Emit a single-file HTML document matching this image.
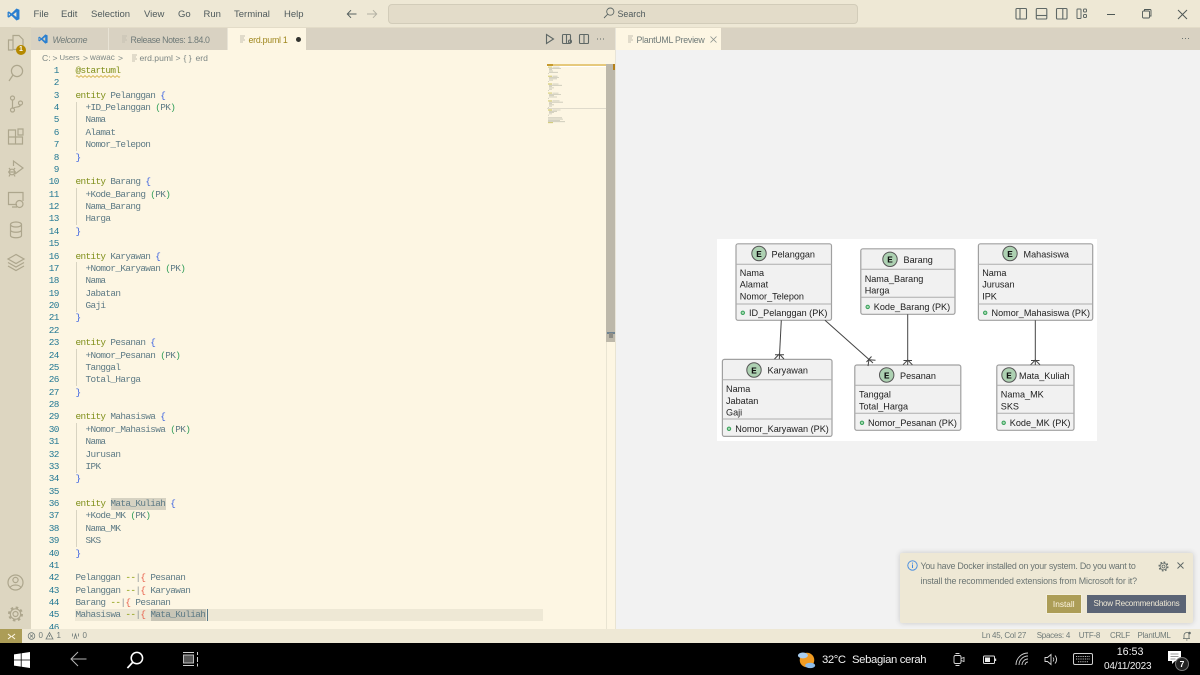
<!DOCTYPE html>
<html lang="en"><head><meta charset="utf-8"><title>erd.puml</title>
<style>
html,body{margin:0;padding:0;width:1200px;height:675px;overflow:hidden;background:#000}
#r{position:absolute;left:0;top:0;width:1200px;height:675px;overflow:hidden;font-family:"Liberation Sans",sans-serif;filter:blur(.3px)}
.a{position:absolute}
.t{position:absolute;white-space:nowrap;line-height:14px;height:14px}
.m{font-size:9.5px;color:#4f5a5c;top:7.5px}
.tab{font-size:8.8px;letter-spacing:-.25px;color:#6f7a78;top:32.5px}
.bc{font-size:8.6px;color:#7d8785;top:50.5px}
.st{font-size:8px;letter-spacing:-.25px;color:#6f7a78;top:629px}
#code{position:absolute;left:75.5px;top:64.9px;font-family:"Liberation Mono",monospace;font-size:9.4px;letter-spacing:-.64px;color:#5d7a85;white-space:pre}
#code div{height:12.375px;line-height:12.375px}
#nums{position:absolute;left:30px;width:28.7px;top:64.9px;text-align:right;font-family:"Liberation Mono",monospace;font-size:9.4px;letter-spacing:-.64px;color:#237893}
#nums div{height:12.375px;line-height:12.375px}
.e{color:#7f8f1a}.b{color:#3b62e0}.p{color:#2f9e58}.o{color:#859900}.r{color:#e8604c}.g{color:#8c9698}
svg{position:absolute;overflow:visible}
.ic{fill:none;stroke:#ada68d;stroke-width:1.2}
</style></head><body><div id="r">

<!-- backgrounds -->
<div class="a" style="left:0;top:0;width:1200px;height:27px;background:#eee8d5"></div>
<div class="a" style="left:0;top:27px;width:1200px;height:1px;background:#e3dcc8"></div>
<div class="a" style="left:0;top:27px;width:31px;height:602px;background:#ddd6c1"></div>
<div class="a" style="left:31px;top:28px;width:1169px;height:22px;background:#d9d2c2"></div>
<div class="a" style="left:31px;top:50px;width:584px;height:579px;background:#fdf6e3"></div>
<div class="a" style="left:615px;top:28px;width:1.5px;height:601px;background:#e8e4d8"></div>
<div class="a" style="left:616px;top:50px;width:584px;height:579px;background:#f2f2f2"></div>
<div class="a" style="left:0;top:629px;width:1200px;height:14px;background:#eee8d5"></div>
<div class="a" style="left:0;top:643px;width:1200px;height:32px;background:#000"></div>

<!-- title bar -->
<svg style="left:7px;top:7.5px" width="13" height="13" viewBox="0 0 24 24"><path fill="#2a7fd0" fill-rule="evenodd" d="M17.5 1 8.2 10 3.4 6.3 1 7.5v9l2.4 1.2L8.2 14l9.3 9 5.500-2.300V3.300zM17.300 7.300 11.400 12l5.900 4.700zM3.400 9.400 5.900 12l-2.500 2.600z"/></svg>
<div class="t m" style="left:33.5px">File</div>
<div class="t m" style="left:61px">Edit</div>
<div class="t m" style="left:91px">Selection</div>
<div class="t m" style="left:144px">View</div>
<div class="t m" style="left:178px">Go</div>
<div class="t m" style="left:203.5px">Run</div>
<div class="t m" style="left:234px">Terminal</div>
<div class="t m" style="left:284px">Help</div>
<svg style="left:346px;top:9px" width="12" height="10" viewBox="0 0 12 10"><path d="M10.5 5H1.5M5 1.2 1.3 5 5 8.8" fill="none" stroke="#55605f" stroke-width="1"/></svg>
<svg style="left:366px;top:9px" width="12" height="10" viewBox="0 0 12 10"><path d="M1 5h9M7 1.2 10.7 5 7 8.8" fill="none" stroke="#b3b1a3" stroke-width="1"/></svg>
<div class="a" style="left:387.5px;top:4px;width:468px;height:18px;background:#e3dcc9;border:1px solid #d2ccb9;border-radius:4px"></div>
<svg style="left:603px;top:7px" width="12" height="12" viewBox="0 0 12 12"><circle cx="7.3" cy="4.6" r="3.6" fill="none" stroke="#5c6664" stroke-width=".9"/><path d="M4.700 7.200 1 11" stroke="#5c6664" stroke-width=".9"/></svg>
<div class="t" style="left:617.5px;top:7px;font-size:8.9px;color:#4f5a5c">Search</div>
<!-- layout icons -->
<svg style="left:1015px;top:7px" width="60" height="14" viewBox="0 0 60 14"><g fill="none" stroke="#5f6866" stroke-width="1.1"><rect x="1" y="1.500" width="10.500" height="10.500" rx="1"/><path d="M5 1.500v10.500"/><rect x="21.300" y="1.500" width="10.500" height="10.500" rx="1"/><path d="M21.300 8.500h10.500"/><rect x="41.500" y="1.500" width="10.500" height="10.500" rx="1"/><path d="M47.800 1.500v10.500"/></g></svg>
<svg style="left:1076px;top:8px" width="14" height="12" viewBox="0 0 14 12"><g fill="none" stroke="#5f6866" stroke-width="1"><rect x="1" y="1" width="4" height="9.500" rx=".6"/><rect x="7.500" y="1" width="3" height="3" rx="1"/><rect x="7.500" y="6.500" width="3" height="3" rx="1"/></g></svg>
<div class="a" style="left:1106.5px;top:13.5px;width:8px;height:1px;background:#4e5856"></div>
<svg style="left:1141px;top:8px" width="12" height="12" viewBox="0 0 12 12"><g fill="none" stroke="#4e5856" stroke-width=".9"><rect x="1.500" y="3" width="7" height="7" rx="1"/><path d="M3.500 3V1.500h5.500a1 1 0 0 1 1 1V8H8.500"/></g></svg>
<svg style="left:1177px;top:8.5px" width="11" height="11" viewBox="0 0 11 11"><path d="M1 1l9 9M10 1l-9 9" stroke="#4e5856" stroke-width="1"/></svg>

<!-- tabs -->
<div class="a" style="left:108px;top:28px;width:1px;height:22px;background:#e8e3d5"></div>
<div class="a" style="left:227px;top:28px;width:1px;height:22px;background:#e8e3d5"></div>
<div class="a" style="left:228px;top:28px;width:78px;height:22px;background:#fdf6e3"></div>
<div class="a" style="left:616px;top:28px;width:105px;height:22px;background:#fdf6e3"></div>
<svg style="left:37.5px;top:33.5px" width="10" height="10" viewBox="0 0 24 24"><path fill="#2a7fd0" fill-rule="evenodd" d="M17.500 1 8.200 10 3.400 6.300 1 7.500v9l2.400 1.200L8.200 14l9.300 9 5.500-2.300V3.300zM17.300 7.300 11.400 12l5.900 4.700zM3.400 9.400 5.900 12l-2.500 2.600z"/></svg>
<div class="t tab" style="left:52.5px;font-style:italic">Welcome</div>
<svg style="left:121px;top:35px" width="7" height="8" viewBox="0 0 7 8"><path d="M1 1h5M1 3h4M1 5h5M1 7h3" stroke="#c5c0b1" stroke-width=".9"/></svg>
<div class="t tab" style="left:130.5px;letter-spacing:-.38px">Release Notes: 1.84.0</div>
<svg style="left:239px;top:35px" width="7" height="8" viewBox="0 0 7 8"><path d="M1 1h5M1 3h4M1 5h5M1 7h3" stroke="#c5c0b1" stroke-width=".9"/></svg>
<div class="t tab" style="left:248.5px;color:#a08820">erd.puml 1</div>
<div class="a" style="left:295.5px;top:36.5px;width:5px;height:5px;border-radius:50%;background:#33342f"></div>
<svg style="left:545px;top:33px" width="70" height="12" viewBox="0 0 70 12"><g fill="none" stroke="#5f6866" stroke-width="1.100"><path d="M1.500 1.500v9l7-4.500z"/><rect x="17.500" y="1.500" width="8" height="9" rx="1"/><path d="M21.500 1.500v9"/><circle cx="25" cy="8.500" r="1.500"/><rect x="34.500" y="1.500" width="9" height="9" rx="1"/><path d="M39 1.500v9"/></g><path d="M52 6h1M55 6h1M58 6h1" stroke="#5f6866" stroke-width="1"/></svg>
<svg style="left:627px;top:35px" width="7" height="8" viewBox="0 0 7 8"><path d="M1 1h5M1 3h4M1 5h5M1 7h3" stroke="#c5c0b1" stroke-width=".9"/></svg>
<div class="t tab" style="left:636.5px">PlantUML Preview</div>
<svg style="left:709.5px;top:35.5px" width="7" height="7" viewBox="0 0 7 7"><path d="M.5.5l6 6M6.500.5l-6 6" stroke="#8a918d" stroke-width=".8"/></svg>
<svg style="left:1181px;top:37px" width="10" height="3" viewBox="0 0 10 3"><path d="M1 1.500h1M4 1.500h1M7 1.500h1" stroke="#6b7472" stroke-width="1"/></svg>

<!-- activity bar -->
<svg style="left:0;top:0" width="31" height="280" viewBox="0 0 31 280">
<g class="ic">
<path d="M13 35.500h6l4 4v10h-10zM13 40H8.500v9.500M8.500 49.500v.5h4.500"/>
<circle cx="17" cy="71" r="5.600"/><path d="M13 75 9 81"/>
<circle cx="12.500" cy="98" r="2"/><circle cx="12.500" cy="110" r="2"/><circle cx="20.500" cy="103" r="2"/><path d="M12.500 100v8M20.500 105c0 2.500-6 1.500-8 3.500"/>
<path d="M8.500 137h7v-7h-7zM8.500 144h7v-7h-7zM15.500 144h7v-7h-7zM18 129h5v6h-5z"/>
<path d="M13.500 166v-5l9.500 7-8 6"/><circle cx="12" cy="172" r="2.800"/><path d="M8 172h8M9 168l1.500 2M15 168l-1.500 2M9 176.500l1-2M15 176.500l-1-2"/>
<path d="M23 201v-8.500H8.500v12h8.500M12 207h5"/><circle cx="19.500" cy="204" r="3.500"/>
<ellipse cx="16" cy="224.500" rx="5.500" ry="2.500"/><path d="M10.500 224.500v11c0 3 11 3 11 0v-11M10.500 230c0 3 11 3 11 0"/>
<path d="M16 254.500l-8 4.500 8 4.500 8-4.500zM8 262.500l8 4.500 8-4.500M8 266l8 4.500 8-4.500"/>
</g></svg>
<div class="a" style="left:16px;top:44.5px;width:10px;height:10px;border-radius:50%;background:#b58900;color:#fff;font-size:7px;font-weight:bold;line-height:10px;text-align:center">1</div>
<svg style="left:0;top:570px" width="31" height="55" viewBox="0 0 31 55"><g class="ic"><circle cx="15.500" cy="12.500" r="7.500"/><circle cx="15.500" cy="10" r="2.600"/><path d="M10 18c1-4 10-4 11 0"/><circle cx="15.500" cy="44" r="2.500"/><circle cx="15.500" cy="44" r="5.200"/><circle cx="15.500" cy="44" r="6.500" stroke-width="2" stroke-dasharray="2.600 2.500"/></g></svg>

<!-- breadcrumb -->
<div class="t bc" style="left:42px">C:</div><div class="t bc" style="left:52.500px">&gt;</div>
<div class="t bc" style="left:59.500px;font-size:7.700px">Users</div><div class="t bc" style="left:83px">&gt;</div>
<div class="t bc" style="left:90px;font-size:8.100px">wawac</div><div class="t bc" style="left:118px">&gt;</div>
<svg style="left:130.500px;top:54px" width="7" height="8" viewBox="0 0 7 8"><path d="M1 1h5M1 3h4M1 5h5M1 7h3" stroke="#c5c0b1" stroke-width=".9"/></svg>
<div class="t bc" style="left:139.500px">erd.puml</div><div class="t bc" style="left:175.500px">&gt;</div>
<div class="t bc" style="left:183.500px">{ }</div>
<div class="t bc" style="left:195.500px">erd</div>

<!-- line highlight & selection -->
<div class="a" style="left:75px;top:608.800px;width:468px;height:12.400px;background:#eee8d5"></div>
<div class="a" style="left:150.500px;top:608.800px;width:55.500px;height:12.400px;background:#c8c5b6"></div>
<div class="a" style="left:110.500px;top:497.500px;width:55.500px;height:12.400px;background:#d6d2c2"></div>
<div class="a" style="left:206.500px;top:608.800px;width:1px;height:12.400px;background:#56788a"></div>

<!-- indent guides -->
<div class="a" style="left:76px;top:101.500px;width:1px;height:49.500px;background:#d8d3c1"></div>
<div class="a" style="left:76px;top:188px;width:1px;height:37px;background:#d8d3c1"></div>
<div class="a" style="left:76px;top:262.300px;width:1px;height:49.500px;background:#d8d3c1"></div>
<div class="a" style="left:76px;top:348.900px;width:1px;height:37px;background:#d8d3c1"></div>
<div class="a" style="left:76px;top:423.100px;width:1px;height:49.500px;background:#d8d3c1"></div>
<div class="a" style="left:76px;top:509.800px;width:1px;height:37px;background:#d8d3c1"></div>

<div id="nums"><div>1</div><div>2</div><div>3</div><div>4</div><div>5</div><div>6</div><div>7</div><div>8</div><div>9</div><div>10</div><div>11</div><div>12</div><div>13</div><div>14</div><div>15</div><div>16</div><div>17</div><div>18</div><div>19</div><div>20</div><div>21</div><div>22</div><div>23</div><div>24</div><div>25</div><div>26</div><div>27</div><div>28</div><div>29</div><div>30</div><div>31</div><div>32</div><div>33</div><div>34</div><div>35</div><div>36</div><div>37</div><div>38</div><div>39</div><div>40</div><div>41</div><div>42</div><div>43</div><div>44</div><div>45</div><div style="height:7.500px;overflow:hidden">46</div></div>

<div id="code"><div class="e">@startuml</div><div> </div><div><span class="e">entity</span> Pelanggan <span class="b">{</span></div><div>  +ID_Pelanggan <span class="p">(</span>PK<span class="p">)</span></div><div>  Nama</div><div>  Alamat</div><div>  Nomor_Telepon</div><div><span class="b">}</span></div><div> </div><div><span class="e">entity</span> Barang <span class="b">{</span></div><div>  +Kode_Barang <span class="p">(</span>PK<span class="p">)</span></div><div>  Nama_Barang</div><div>  Harga</div><div><span class="b">}</span></div><div> </div><div><span class="e">entity</span> Karyawan <span class="b">{</span></div><div>  +Nomor_Karyawan <span class="p">(</span>PK<span class="p">)</span></div><div>  Nama</div><div>  Jabatan</div><div>  Gaji</div><div><span class="b">}</span></div><div> </div><div><span class="e">entity</span> Pesanan <span class="b">{</span></div><div>  +Nomor_Pesanan <span class="p">(</span>PK<span class="p">)</span></div><div>  Tanggal</div><div>  Total_Harga</div><div><span class="b">}</span></div><div> </div><div><span class="e">entity</span> Mahasiswa <span class="b">{</span></div><div>  +Nomor_Mahasiswa <span class="p">(</span>PK<span class="p">)</span></div><div>  Nama</div><div>  Jurusan</div><div>  IPK</div><div><span class="b">}</span></div><div> </div><div><span class="e">entity</span> Mata_Kuliah <span class="b">{</span></div><div>  +Kode_MK <span class="p">(</span>PK<span class="p">)</span></div><div>  Nama_MK</div><div>  SKS</div><div><span class="b">}</span></div><div> </div><div>Pelanggan <span class="o">--</span><span class="g">|</span><span class="r">{</span> Pesanan</div><div>Pelanggan <span class="o">--</span><span class="g">|</span><span class="r">{</span> Karyawan</div><div>Barang <span class="o">--</span><span class="g">|</span><span class="r">{</span> Pesanan</div><div>Mahasiswa <span class="o">--</span><span class="g">|</span><span class="r">{</span> Mata_Kuliah</div></div>
<svg style="left:75.500px;top:74.500px" width="46" height="3" viewBox="0 0 46 3"><path d="M0 1.500q1-1.500 2 0t2 0 2 0 2 0 2 0 2 0 2 0 2 0 2 0 2 0 2 0 2 0 2 0 2 0 2 0 2 0 2 0 2 0 2 0 2 0 2 0 2 0" fill="none" stroke="#c9a020" stroke-width=".7"/></svg>

<!-- minimap -->
<div class="a" style="left:547px;top:64px;width:59px;height:2px;background:#e6c97c"></div>
<div class="a" style="left:547px;top:64px;width:6px;height:2px;background:#c79a2e"></div>
<div class="a" style="left:547px;top:66px;width:59px;height:.8px;background:#fff"></div>
<div class="a" style="left:547px;top:108px;width:59px;height:1px;background:#dfdacb"></div>
<svg style="left:0;top:0" width="620" height="130" viewBox="0 0 620 130">
<path d="M548 67.100h4M548 84h4M548 76.200h4M548 93.100h4M548 100.900h4M548 110h4M548 122.700h5" stroke="#c9c05a" stroke-width=".9"/>
<path d="M552.500 67.100h7M549 68.400h12M549 69.700h3M549 71h4M549 72.300h9M548 73.600h1M552.500 76.200h5M549 77.500h10M549 78.800h8M549 80.100h4M548 81.400h1M552.500 84h6M549 85.300h13M549 86.600h3M549 87.900h5M549 89.200h3M548 90.500h1M552.500 93.100h6M549 94.400h12M549 95.700h5M549 97h8M548 98.300h1M552.500 100.900h7M549 102.200h14M549 103.500h3M549 104.800h5M549 106.100h3M548 107.400h1M552.500 110h8M549 111.300h8M549 112.600h5M549 113.900h3M548 115.200h1M548 117.800h14M548 119.100h15M548 120.400h12M548 121.700h17" stroke="#c8c6b6" stroke-width=".8"/></svg>
<!-- scrollbar -->
<div class="a" style="left:606px;top:64px;width:9px;height:278px;background:#bdb8aa"></div>
<div class="a" style="left:613px;top:64px;width:2px;height:6px;background:#b5801a"></div>
<div class="a" style="left:607px;top:332px;width:8px;height:1.500px;background:#6f8391"></div>
<div class="a" style="left:609px;top:333px;width:4px;height:5px;background:#8e8d86"></div>
<div class="a" style="left:606px;top:342px;width:1px;height:287px;background:#e9e4d2"></div>
<div class="a" style="left:614.500px;top:342px;width:1px;height:287px;background:#e9e4d2"></div>

<!-- diagram -->
<div class="a" style="left:717px;top:239px;width:380px;height:201.500px;background:#fff"></div>
<svg style="left:0;top:0" width="1200" height="675" viewBox="0 0 1200 675" font-family="Liberation Sans, sans-serif" font-size="9.100">
<g fill="#f1f1f1" stroke="#a0a0a0" stroke-width="1.200">
<rect x="736" y="243.800" width="95.500" height="76.500" rx="2"/>
<rect x="860.800" y="248.800" width="94.200" height="65.500" rx="2"/>
<rect x="978.400" y="243.800" width="114.300" height="76.500" rx="2"/>
<rect x="722.400" y="359.400" width="109.600" height="77" rx="2"/>
<rect x="854.800" y="365" width="106" height="65.300" rx="2"/>
<rect x="996.800" y="365" width="77.200" height="65.300" rx="2"/>
</g>
<path d="M736 264.300h95.500M736 304h95.500M860.800 269.300h94.200M860.800 297.300h94.200M978.400 264.300h114.300M978.400 304h114.300M722.400 379.700h109.600M722.400 419h109.600M854.800 385.300h106M854.800 413.300h106M996.800 385.300h77.200M996.800 413.300h77.200" stroke="#adadad" stroke-width="1" fill="none"/>
<g fill="none" stroke="#444" stroke-width="1">
<path d="M781.300 320.300 779.300 359"/><path d="M775 354.800h9M779.300 354 774.500 359M779.300 354 784 359"/>
<path d="M825 320.300 873 363"/><path d="M866.500 362l5-5.500M869 359.700 868 366M869 359.700 875.500 360.300"/>
<path d="M907.700 314.300V365"/><path d="M903.500 360.500h8.500M907.700 360 903 364.800M907.700 360 912.400 364.800"/>
<path d="M1035.300 320.300V365"/><path d="M1031 360.500h8.500M1035.300 360 1030.600 364.800M1035.300 360 1040 364.800"/>
</g>
<g fill="#add1b2" stroke="#555" stroke-width="1">
<circle cx="759" cy="253.500" r="7.200"/><circle cx="890" cy="259.300" r="7.200"/><circle cx="1010" cy="253.500" r="7.200"/><circle cx="754" cy="370" r="7.200"/><circle cx="886.700" cy="375" r="7.200"/><circle cx="1009" cy="375" r="7.200"/>
</g>
<g font-family="Liberation Mono, monospace" font-weight="bold" font-size="9.500" fill="#111" text-anchor="middle">
<text x="759" y="256.800">E</text><text x="890" y="262.600">E</text><text x="1010" y="256.800">E</text><text x="754" y="373.300">E</text><text x="886.700" y="378.300">E</text><text x="1009" y="378.300">E</text>
</g>
<g fill="#1d1d1d">
<text x="771.500" y="257.500">Pelanggan</text><text x="903.500" y="263">Barang</text><text x="1023.500" y="257.500">Mahasiswa</text><text x="767.500" y="373.500">Karyawan</text><text x="900" y="379">Pesanan</text><text x="1019" y="379">Mata_Kuliah</text>
<text x="739.800" y="276">Nama</text><text x="739.800" y="287.500">Alamat</text><text x="739.800" y="299.500">Nomor_Telepon</text><text x="749" y="316">ID_Pelanggan (PK)</text>
<text x="864.700" y="282">Nama_Barang</text><text x="864.700" y="293.500">Harga</text><text x="873.800" y="310">Kode_Barang (PK)</text>
<text x="982.200" y="276">Nama</text><text x="982.200" y="287.500">Jurusan</text><text x="982.200" y="299.500">IPK</text><text x="991.500" y="316">Nomor_Mahasiswa (PK)</text>
<text x="726" y="392">Nama</text><text x="726" y="404">Jabatan</text><text x="726" y="415.500">Gaji</text><text x="735.300" y="432">Nomor_Karyawan (PK)</text>
<text x="859" y="397.500">Tanggal</text><text x="859" y="409.500">Total_Harga</text><text x="868" y="426">Nomor_Pesanan (PK)</text>
<text x="1000.800" y="397.500">Nama_MK</text><text x="1000.800" y="409.500">SKS</text><text x="1009.800" y="426">Kode_MK (PK)</text>
</g>
<g fill="#a9dcb5" stroke="#38a05a" stroke-width="1"><circle cx="742.800" cy="312.800" r="1.700"/><circle cx="867.700" cy="306.900" r="1.700"/><circle cx="985.200" cy="312.800" r="1.700"/><circle cx="729" cy="428.800" r="1.700"/><circle cx="862" cy="422.800" r="1.700"/><circle cx="1003.700" cy="422.800" r="1.700"/></g>
</svg>

<!-- notification -->
<div class="a" style="left:900px;top:553px;width:293px;height:69.500px;background:#eee8d5;border-radius:2px;box-shadow:0 0 6px rgba(0,0,0,.18)"></div>
<svg style="left:906.500px;top:560px" width="11" height="11" viewBox="0 0 11 11"><circle cx="5.500" cy="5.500" r="4.700" fill="none" stroke="#3f88e0" stroke-width=".9"/><path d="M5.500 4.500v3.500M5.500 2.600v1" stroke="#3f88e0" stroke-width="1"/></svg>
<div class="t" style="left:920.500px;top:559px;font-size:8.900px;letter-spacing:-.25px;color:#6b7573">You have Docker installed on your system. Do you want to</div>
<div class="t" style="left:920.500px;top:574px;font-size:8.900px;letter-spacing:-.15px;color:#6b7573">install the recommended extensions from Microsoft for it?</div>
<svg style="left:1158px;top:560.500px" width="11" height="11" viewBox="0 0 11 11"><g fill="none" stroke="#5c6664"><circle cx="5.500" cy="5.500" r="1.500" stroke-width=".8"/><circle cx="5.500" cy="5.500" r="3.400" stroke-width=".8"/><circle cx="5.500" cy="5.500" r="4.400" stroke-width="1.200" stroke-dasharray="1.700 1.750"/></g></svg>
<svg style="left:1176.500px;top:562px" width="7" height="7" viewBox="0 0 7 7"><path d="M.5.500l6 6M6.500.500l-6 6" stroke="#5c6664" stroke-width=".9"/></svg>
<div class="a" style="left:1046.500px;top:594.500px;width:34.500px;height:18px;background:#ac9d57;color:#fdf6e3;font-size:8.300px;line-height:18px;text-align:center;box-shadow:0 0 0 .7px #f7f2e0">Install</div>
<div class="a" style="left:1087px;top:595px;width:99px;height:17.500px;background:#5b6475;color:#eee8d5;font-size:8.100px;letter-spacing:-.2px;line-height:17.500px;text-align:center">Show Recommendations</div>

<!-- status bar -->
<div class="a" style="left:0;top:629px;width:22px;height:14px;background:#ac9d57"></div>
<svg style="left:7px;top:631.500px" width="9" height="9" viewBox="0 0 9 9"><path d="M1 7 4 4.500 1 2M8 2 5 4.500 8 7" fill="none" stroke="#fdf6e3" stroke-width="1"/></svg>
<svg style="left:28px;top:631px" width="60" height="10" viewBox="0 0 60 10"><g fill="none" stroke="#6f7a78" stroke-width=".8"><circle cx="3.500" cy="5" r="3.300"/><path d="M2 3.500l3 3M5 3.500l-3 3"/><path d="M18 8h7l-3.500-6.500zM21.500 4v2"/><path d="M46 8l1.500-5 1.500 5M44.500 2.500v3M50.500 2.500v3"/></g></svg>
<div class="t st" style="left:38.500px">0</div><div class="t st" style="left:56.500px">1</div><div class="t st" style="left:82.500px">0</div>
<div class="t st" style="left:981.700px">Ln 45, Col 27</div>
<div class="t st" style="left:1036.700px">Spaces: 4</div>
<div class="t st" style="left:1078.700px">UTF-8</div>
<div class="t st" style="left:1110px">CRLF</div>
<div class="t st" style="left:1137.500px">PlantUML</div>
<svg style="left:1181.500px;top:631px" width="10" height="10" viewBox="0 0 10 10"><path d="M2 7.500V4.500a3 3 0 0 1 5-2.200V7.500zM1 7.500h7M4 9h1.500" fill="none" stroke="#5f6866" stroke-width=".8"/><circle cx="7.500" cy="2" r="1.300" fill="#5f6866"/></svg>

<!-- taskbar -->
<svg style="left:14px;top:651.500px" width="16" height="16" viewBox="0 0 16 16"><path fill="#fff" d="M0 2.400 6.800 1.400v6.200H0zM7.600 1.300 16 0v7.600H7.600zM0 8.400h6.800v6.200L0 13.600zM7.600 8.400H16V16l-8.400-1.300z"/></svg>
<svg style="left:70px;top:651px" width="17" height="16" viewBox="0 0 17 16"><path d="M16.500 8H1M8 1 1 8l7 7" fill="none" stroke="#b5b5b5" stroke-width="1"/></svg>
<svg style="left:125.500px;top:651px" width="18" height="18" viewBox="0 0 19 19"><circle cx="11.500" cy="7.500" r="6" fill="none" stroke="#fff" stroke-width="1.600"/><path d="M7 12 1.500 18" stroke="#fff" stroke-width="1.800"/></svg>
<svg style="left:182px;top:651px" width="17" height="16" viewBox="0 0 17 16"><g fill="none" stroke="#d0d0d0" stroke-width="1"><path d="M1 1.500h11M1 14.500h11"/><rect x="1.500" y="4" width="10" height="8" fill="#555" stroke="#bbb"/><path d="M15.500 1v3M15.500 6v5M15.500 12.500v3"/></g></svg>
<!-- weather -->
<svg style="left:796.500px;top:649.500px" width="20" height="20" viewBox="0 0 22 22"><circle cx="11" cy="11" r="8" fill="#f09b22"/><path d="M12 3a8 8 0 0 1 0 16 7 7 0 0 0 0-16z" fill="#e57e1a"/><ellipse cx="6.500" cy="6" rx="5.500" ry="3.200" fill="#a9cdee"/><ellipse cx="14.500" cy="17" rx="5.500" ry="3" fill="#8dbbe8"/></svg>
<div class="t" style="left:822px;top:653px;font-size:11.300px;letter-spacing:-.4px;color:#f2f2f2">32°C</div>
<div class="t" style="left:852px;top:653px;font-size:11.300px;letter-spacing:-.35px;color:#f2f2f2">Sebagian cerah</div>
<svg style="left:952px;top:652px" width="14" height="15" viewBox="0 0 14 15"><g fill="none" stroke="#d8d8d8" stroke-width=".9"><rect x="2" y="3.500" width="7" height="8" rx="1.500"/><path d="M3.500 1.500h4M3.500 13.500h4M9 6.500l3-1v4l-3-1"/></g></svg>
<svg style="left:983px;top:655px" width="14" height="10" viewBox="0 0 14 10"><rect x=".5" y="1" width="11" height="7.500" rx="1" fill="none" stroke="#ddd"/><rect x="2" y="2.500" width="5" height="4.500" fill="#eee"/><rect x="12" y="3.500" width="1.200" height="2.500" fill="#ddd"/></svg>
<svg style="left:1015px;top:652px" width="15" height="15" viewBox="0 0 15 15"><g fill="none" stroke="#cfcfcf" stroke-width=".9"><path d="M1 13a12 12 0 0 1 12-12M4 13a9 9 0 0 1 9-9M7 13a6 6 0 0 1 6-6M10 13a3 3 0 0 1 3-3"/></g></svg>
<svg style="left:1044px;top:652px" width="15" height="15" viewBox="0 0 15 15"><g fill="none" stroke="#d8d8d8" stroke-width=".9"><path d="M1 5.500h2.500L7 2.500v10l-3.500-3H1zM9 5.500a3 3 0 0 1 0 4M11 3.500a6 6 0 0 1 0 8"/></g></svg>
<svg style="left:1073px;top:653px" width="20" height="13" viewBox="0 0 20 13"><rect x=".5" y=".5" width="19" height="11" rx="1.500" fill="none" stroke="#d0d0d0"/><path d="M3 3.500h14M3 6h14M5 8.800h10" stroke="#bbb" stroke-width="1" stroke-dasharray="1 .8"/></svg>
<div class="t" style="left:1116.700px;top:645px;font-size:10.700px;color:#eee">16:53</div>
<div class="t" style="left:1104px;top:659.500px;font-size:10px;letter-spacing:-.2px;color:#eee">04/11/2023</div>
<svg style="left:1168px;top:651px" width="14" height="13" viewBox="0 0 14 13"><path d="M0 0h13v10H7l-3 3v-3H0z" fill="#fff"/><path d="M2.500 3h8M2.500 5.500h8M2.500 8h5" stroke="#777" stroke-width=".7"/></svg>
<div class="a" style="left:1175px;top:657px;width:12px;height:12px;border-radius:50%;background:#222;border:1px solid #777;color:#fff;font-size:8.500px;font-weight:bold;line-height:12px;text-align:center">7</div>

</div></body></html>
